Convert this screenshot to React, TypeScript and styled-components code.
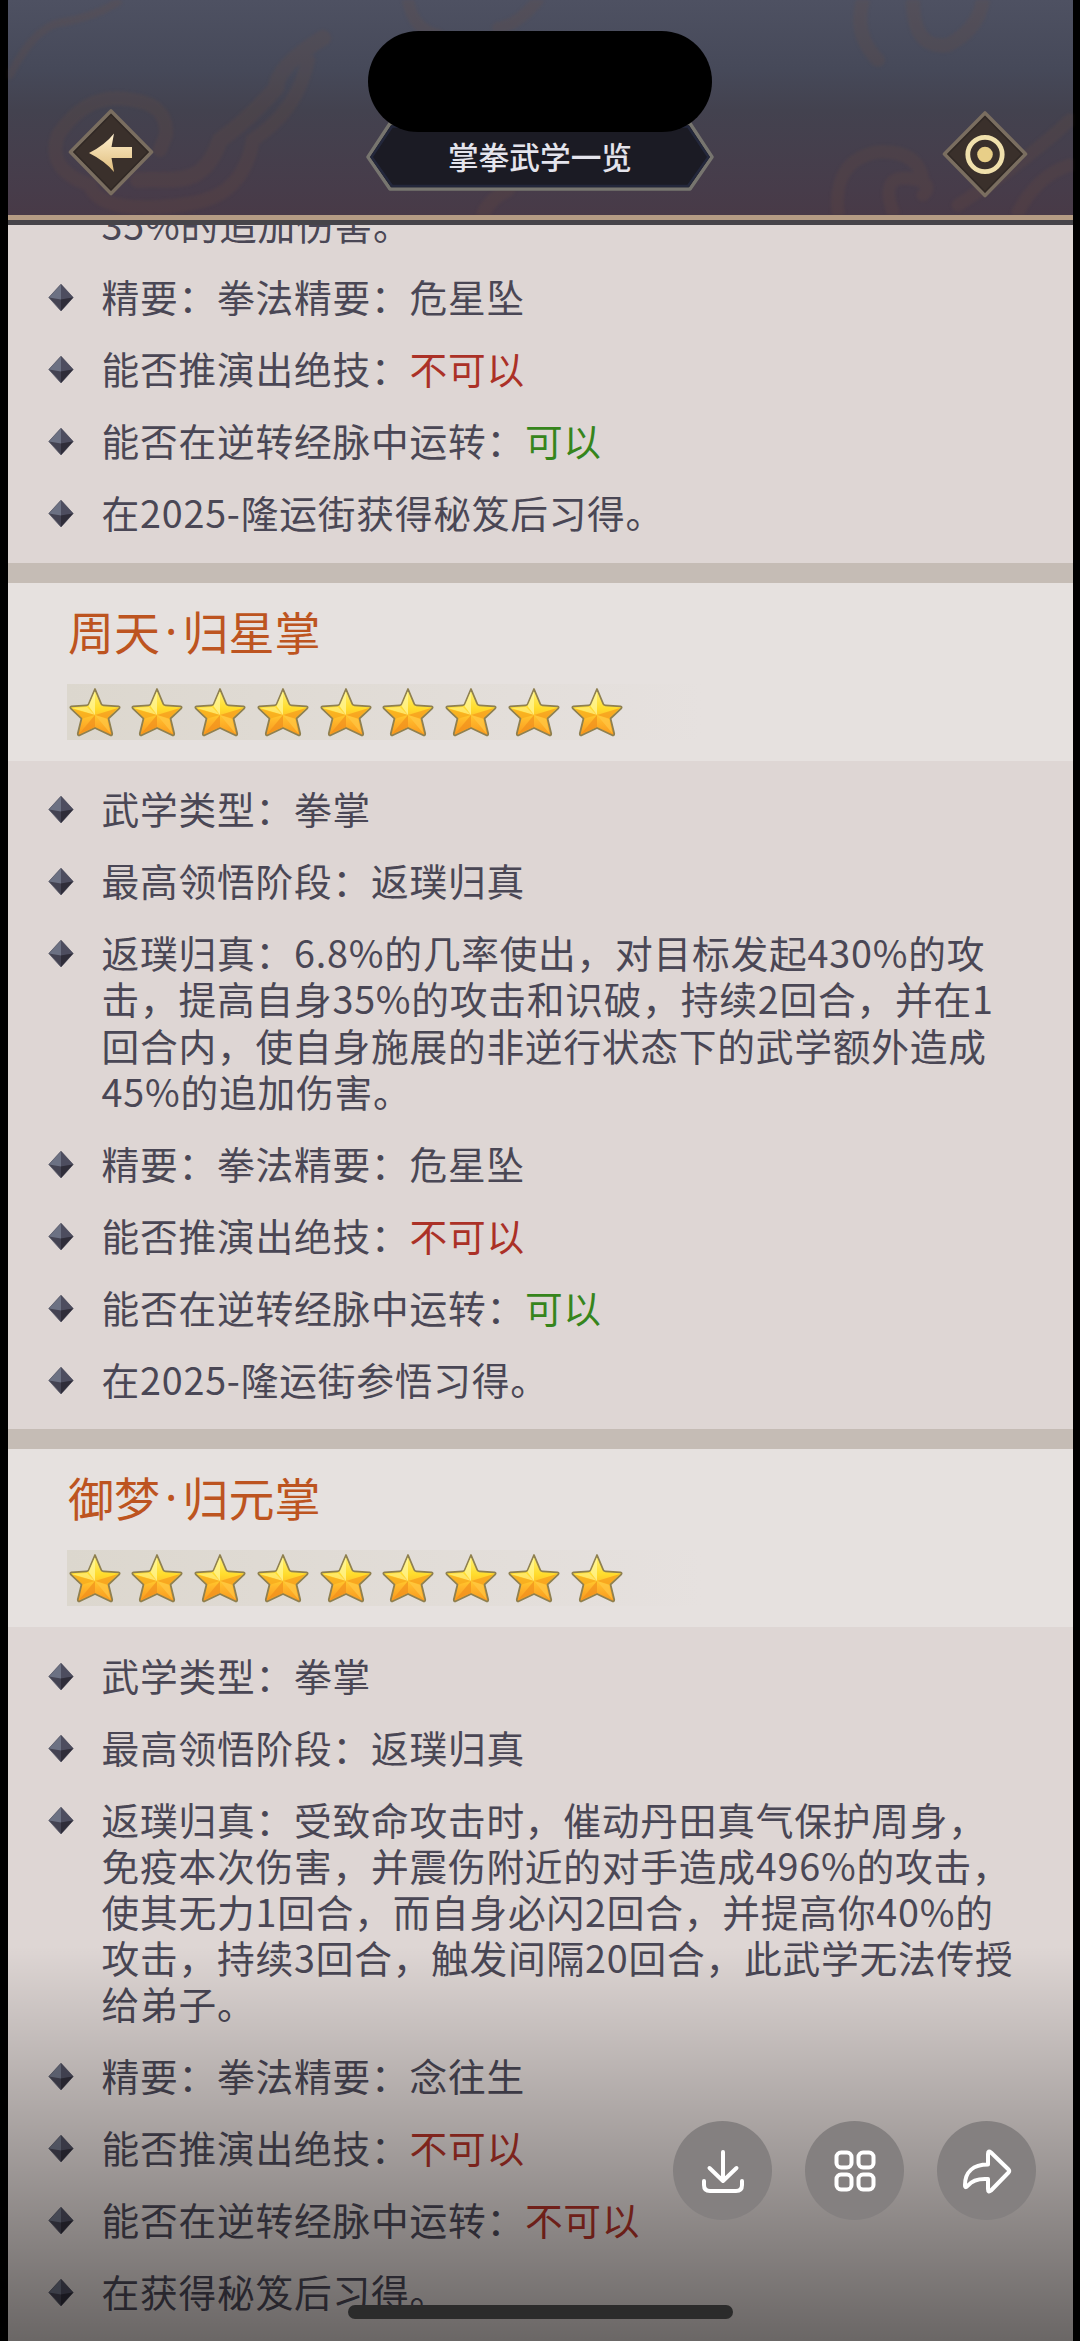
import React from "react";
import styled, { createGlobalStyle } from "styled-components";

const Global = createGlobalStyle`
  * { box-sizing: border-box; }
  body { margin: 0; background: #000; }
`;

const Screen = styled.div`
  position: relative;
  width: 1080px;
  height: 2341px;
  padding: 0 7.5px;
  overflow: hidden;
  background: #000;
  font-family: "Noto Sans CJK SC", "Noto Sans", sans-serif;
`;

const Panel = styled.div`
  display: flex;
  flex-direction: column;
  height: 2341px;
  background: #ded6d4;
`;

const Header = styled.header`
  position: relative;
  flex: none;
  display: flex;
  justify-content: space-between;
  align-items: flex-start;
  height: 225px;
  padding: 108px 45px 0 60px;
  background: linear-gradient(#4e5162 0, #464959 70px, #43424f 110px, #473c4a 190px, #483a47 215px);
  &::after {
    content: "";
    position: absolute;
    left: 0; right: 0; bottom: 0;
    height: 10px;
    background: linear-gradient(#b59c84 0 5.5px, #464449 5.5px 10px);
  }
`;

const Clouds = styled.svg`
  position: absolute;
  left: 0; top: 0;
  width: 1065px;
  height: 215px;
  filter: blur(1.5px);
`;

const Island = styled.div`
  position: absolute;
  left: 368px; top: 31px;
  width: 344px; height: 101px;
  border-radius: 51px;
  background: #000;
`;

const DiamondButton = styled.button<{ $drop?: number }>`
  position: relative;
  width: 86px;
  height: 88px;
  margin-top: ${p => p.$drop ?? 0}px;
  padding: 0;
  border: 0;
  background: none;
  svg { display: block; }
`;

const TitlePlate = styled.div`
  position: relative;
  display: grid;
  place-items: center;
  width: 350px;
  height: 72px;
  margin: 12px 15px 0 0;
  svg { position: absolute; inset: 0; }
`;

const TitleText = styled.h1`
  position: relative;
  margin: 0;
  font-size: 30.7px;
  font-weight: 500;
  line-height: 40px;
  color: #e4e4ec;
`;

const Scroll = styled.main`
  flex: 1;
  min-height: 0;
  overflow: hidden;
`;

const SectionHead = styled.div`
  height: 198px;
  padding: 24px 0 0 59.5px;
  border-top: 20.5px solid #c5bcb5;
  background: #e6e1df;
`;

const SkillName = styled.h2`
  display: flex;
  margin: 0;
  height: 46px;
  padding-left: 1px;
  font-size: 46px;
  font-weight: 400;
  line-height: 46px;
  color: #bd5420;
`;

const MiddleDot = styled.span`
  width: 22.5px;
  text-align: center;
  font-family: "Noto Sans", sans-serif;
`;

const Stars = styled.div`
  display: flex;
  align-items: center;
  gap: 10.8px;
  width: 634px;
  height: 56px;
  margin-top: 31px;
  padding-left: 1.5px;
  background: linear-gradient(90deg, #dcd7ce, #e6e1df);
`;

const List = styled.ul<{ $clipped?: boolean }>`
  display: flex;
  flex-direction: column;
  gap: 25.8px;
  margin: ${p => (p.$clipped ? "-21.7px" : "0")} 0 0;
  padding: ${p => (p.$clipped ? "0" : "26.3px")} 0 25.3px 26px;
  list-style: none;
`;

const Item = styled.li`
  display: flex;
  align-items: flex-start;
`;

const Bullet = styled.svg<{ $hidden?: boolean }>`
  flex: none;
  width: 54px;
  height: 46.2px;
  margin-right: 14px;
  visibility: ${p => (p.$hidden ? "hidden" : "visible")};
`;

const Lines = styled.div`
  margin: -2px 0 2px;
  font-size: 37.7px;
  letter-spacing: 0.8px;
  line-height: 46.2px;
  color: #4a4755;
  white-space: pre;
`;

const Verdict = styled.span<{ $ok?: boolean }>`
  color: ${p => (p.$ok ? "#36851c" : "#ab3127")};
`;

const Shade = styled.div`
  position: absolute;
  left: 0; right: 0; bottom: 0;
  height: 395px;
  background: linear-gradient(rgba(0, 0, 0, 0), rgba(0, 0, 0, 0.52));
`;

const Actions = styled.div`
  position: absolute;
  right: 44px; top: 2121px;
  display: flex;
  gap: 33px;
`;

const RoundButton = styled.button`
  display: grid;
  place-items: center;
  width: 99px;
  height: 99px;
  padding: 0;
  border: 0;
  border-radius: 50%;
  background: #848080;
`;

const HomeBar = styled.div`
  position: absolute;
  left: 348px; top: 2305px;
  width: 385px; height: 14px;
  border-radius: 7px;
  background: #2b2b2b;
`;

const Star = () => (
  <svg width="52" height="50" viewBox="0 0 52 50">
    <defs>
      <linearGradient id="gold" x1="0" y1="0" x2="0" y2="1">
        <stop offset="0" stopColor="#fff27a" />
        <stop offset=".42" stopColor="#ffdc2c" />
        <stop offset=".7" stopColor="#ffb52a" />
        <stop offset="1" stopColor="#f99a1e" />
      </linearGradient>
    </defs>
    <path d="M26 2 L32.300 17 Q32.800 18.200 34.500 18.300 L49.500 19.300 Q51.300 19.800 50.300 21.300 L39.500 31.500 L43.200 46.500 Q43.400 48.700 41.300 48.300 L26 41 L10.700 48.300 Q8.600 48.700 8.800 46.500 L12.500 31.500 L1.700 21.300 Q.7 19.800 2.500 19.300 L17.500 18.300 Q19.200 18.200 19.700 17 Z" fill="url(#gold)" stroke="#8f8050" strokeWidth="1.800" strokeLinejoin="round" />
    <path d="M26 4 L26 28 L19.500 19 Z" fill="#fff8a0" opacity=".7" />
    <path d="M26 28 L49 21 L38 31.500 Z" fill="#f59a1c" opacity=".7" />
    <path d="M26 28 L3 21 L18 20 Z" fill="#fff08c" opacity=".6" />
    <path d="M26 28 L3.500 21.700 L13.500 31.500 Z" fill="#f7a81e" opacity=".75" />
    <path d="M26 28 L26 40 L10.500 46.500 Z" fill="#f08e1c" opacity=".65" />
    <path d="M26 28 L41.500 46.500 L38 32 Z" fill="#ffc844" opacity=".7" />
  </svg>
);

const Gem = ({ hidden }: { hidden?: boolean }) => (
  <Bullet $hidden={hidden} viewBox="0 0 54 46.2">
    <path d="M27 9.200 L39.200 22.500 L27 36 L14.800 22.500 Z" fill="#444352" stroke="#5b5a68" strokeWidth=".8" />
    <path d="M27 9.500 L27 24.500 L15 22.500 Z" fill="#6c7183" />
    <path d="M27 9.500 L39 22.500 L27 24.500 Z" fill="#4d4d5f" />
    <path d="M27 24.500 L39 22.500 L27 35.700 Z" fill="#2f2d39" />
  </Bullet>
);

const DiamondFrame = ({ children }: { children: React.ReactNode }) => (
  <svg width="86" height="88" viewBox="0 0 86 88">
    <defs>
      <linearGradient id="cream" x1="0" y1="0" x2="0" y2="1">
        <stop offset="0" stopColor="#fff0cf" />
        <stop offset="1" stopColor="#dfbd7c" />
      </linearGradient>
    </defs>
    <path d="M43 3 L83.500 44 L43 85.500 L2.500 44 Z" fill="#3a302b" stroke="#7a6e60" strokeWidth="3.600" strokeLinejoin="round" />
    <path d="M43 6.500 L80 44 L43 82 L6 44 Z" fill="none" stroke="#2c2522" strokeWidth="1.500" opacity=".7" />
    {children}
  </svg>
);

const Row = ({ label, children }: { label: string; children?: React.ReactNode }) => (
  <Item>
    <Gem />
    <Lines>{label}{children}</Lines>
  </Item>
);

const Head = ({ school, move }: { school: string; move: string }) => (
  <SectionHead>
    <SkillName>{school}<MiddleDot>·</MiddleDot>{move}</SkillName>
    <Stars>{Array.from({ length: 9 }, (_, i) => <Star key={i} />)}</Stars>
  </SectionHead>
);

export default function App() {
  return (
    <>
      <Global />
      <Screen>
        <Panel>
          <Header>
            <Clouds viewBox="0 0 1065 215" fill="none" strokeLinecap="round">
              <g stroke="#70503f" opacity=".18">
                <path d="M2 75 Q25 30 50 23 Q85 18 110 2" strokeWidth="8" />
                <path d="M315 38 Q270 65 268 88 Q240 120 212 140 C195 190 165 178 130 180" strokeWidth="16" />
                <path d="M300 60 Q290 110 245 140 C235 195 200 205 150 207 Q90 210 82 185 Q38 170 50 135 Q80 90 125 100 Q160 105 158 135 L152 150" strokeWidth="14" />
                <path d="M400 0 Q405 30 430 35 M530 0 Q510 25 490 28" strokeWidth="12" />
                <path d="M855 0 Q845 35 870 60 M905 0 Q905 50 940 45 Q970 30 975 0" strokeWidth="14" />
                <path d="M830 212 Q825 160 870 152 Q910 150 915 180 M885 212 Q870 170 910 180 Q925 185 915 195 M950 205 Q1020 160 1062 120 M1010 212 Q1030 175 1062 165" strokeWidth="13" />
                <path d="M475 215 Q480 200 500 190" strokeWidth="14" />
              </g>
            </Clouds>
            <DiamondButton aria-label="返回">
              <DiamondFrame>
                <path d="M21 45 Q37 37 46 25.500 L43.500 39 H64 V50 H43.500 L46 64 Q37 53 21 45 Z" fill="url(#cream)" />
              </DiamondFrame>
            </DiamondButton>
            <TitlePlate>
              <svg width="350" height="72" viewBox="0 0 350 72">
                <path d="M25 3.500 H325 L347 37 L325 69 H25 L3 37 Z" fill="#1b1b24" stroke="#77756f" strokeWidth="3.500" strokeLinejoin="round" />
                <path d="M27 6.500 H323 L343.500 37 L323 66 H27 L6.500 37 Z" fill="none" stroke="#23273b" strokeWidth="2.500" />
              </svg>
              <TitleText>掌拳武学一览</TitleText>
            </TitlePlate>
            <DiamondButton $drop={2} aria-label="目标">
              <DiamondFrame>
                <circle cx="43" cy="44.500" r="17.200" stroke="#f0e0ac" strokeWidth="4.800" fill="none" />
                <circle cx="43" cy="44.500" r="7.800" fill="#e8cf88" />
              </DiamondFrame>
            </DiamondButton>
          </Header>
          <Scroll>
            <List $clipped>
              <Item>
                <Gem hidden />
                <Lines>35%的追加伤害。</Lines>
              </Item>
              <Row label="精要：拳法精要：危星坠" />
              <Row label="能否推演出绝技："><Verdict>不可以</Verdict></Row>
              <Row label="能否在逆转经脉中运转："><Verdict $ok>可以</Verdict></Row>
              <Row label="在2025-隆运街获得秘笈后习得。" />
            </List>
            <Head school="周天" move="归星掌" />
            <List>
              <Row label="武学类型：拳掌" />
              <Row label="最高领悟阶段：返璞归真" />
              <Row label={"返璞归真：6.8%的几率使出，对目标发起430%的攻\n击，提高自身35%的攻击和识破，持续2回合，并在1\n回合内，使自身施展的非逆行状态下的武学额外造成\n45%的追加伤害。"} />
              <Row label="精要：拳法精要：危星坠" />
              <Row label="能否推演出绝技："><Verdict>不可以</Verdict></Row>
              <Row label="能否在逆转经脉中运转："><Verdict $ok>可以</Verdict></Row>
              <Row label="在2025-隆运街参悟习得。" />
            </List>
            <Head school="御梦" move="归元掌" />
            <List>
              <Row label="武学类型：拳掌" />
              <Row label="最高领悟阶段：返璞归真" />
              <Row label={"返璞归真：受致命攻击时，催动丹田真气保护周身，\n免疫本次伤害，并震伤附近的对手造成496%的攻击，\n使其无力1回合，而自身必闪2回合，并提高你40%的\n攻击，持续3回合，触发间隔20回合，此武学无法传授\n给弟子。"} />
              <Row label="精要：拳法精要：念往生" />
              <Row label="能否推演出绝技："><Verdict>不可以</Verdict></Row>
              <Row label="能否在逆转经脉中运转："><Verdict>不可以</Verdict></Row>
              <Row label="在获得秘笈后习得。" />
            </List>
          </Scroll>
        </Panel>
        <Shade />
        <Island />
        <Actions>
          <RoundButton aria-label="下载">
            <svg width="48" height="48" viewBox="0 0 48 48" fill="none" stroke="#fff" strokeWidth="4" strokeLinecap="round" strokeLinejoin="round">
              <path d="M24 5 V34 M10.500 21 L24 34 L37.500 21 M5 34 V38 Q5 44 11 44 H37 Q43 44 43 38 V34" />
            </svg>
          </RoundButton>
          <RoundButton aria-label="更多">
            <svg width="48" height="48" viewBox="0 0 48 48" fill="none" stroke="#fff" strokeWidth="4">
              <rect x="5.500" y="5.500" width="15" height="15" rx="4.500" />
              <rect x="27.500" y="5.500" width="15" height="15" rx="4.500" />
              <rect x="5.500" y="27.500" width="15" height="15" rx="4.500" />
              <rect x="27.500" y="27.500" width="15" height="15" rx="4.500" />
            </svg>
          </RoundButton>
          <RoundButton aria-label="分享">
            <svg width="52" height="48" viewBox="0 0 52 48" fill="none" stroke="#fff" strokeWidth="4" strokeLinejoin="round">
              <path d="M27 17.500 V7 Q27 3 30 5.500 L47.500 22.500 Q49 24 47.500 25.500 L30 43.500 Q27 46 27 42 V32 Q13 31 7 38.500 Q4 42 4 38 C4 25 12 17.500 27 17.500 Z" />
            </svg>
          </RoundButton>
        </Actions>
        <HomeBar />
      </Screen>
    </>
  );
}
